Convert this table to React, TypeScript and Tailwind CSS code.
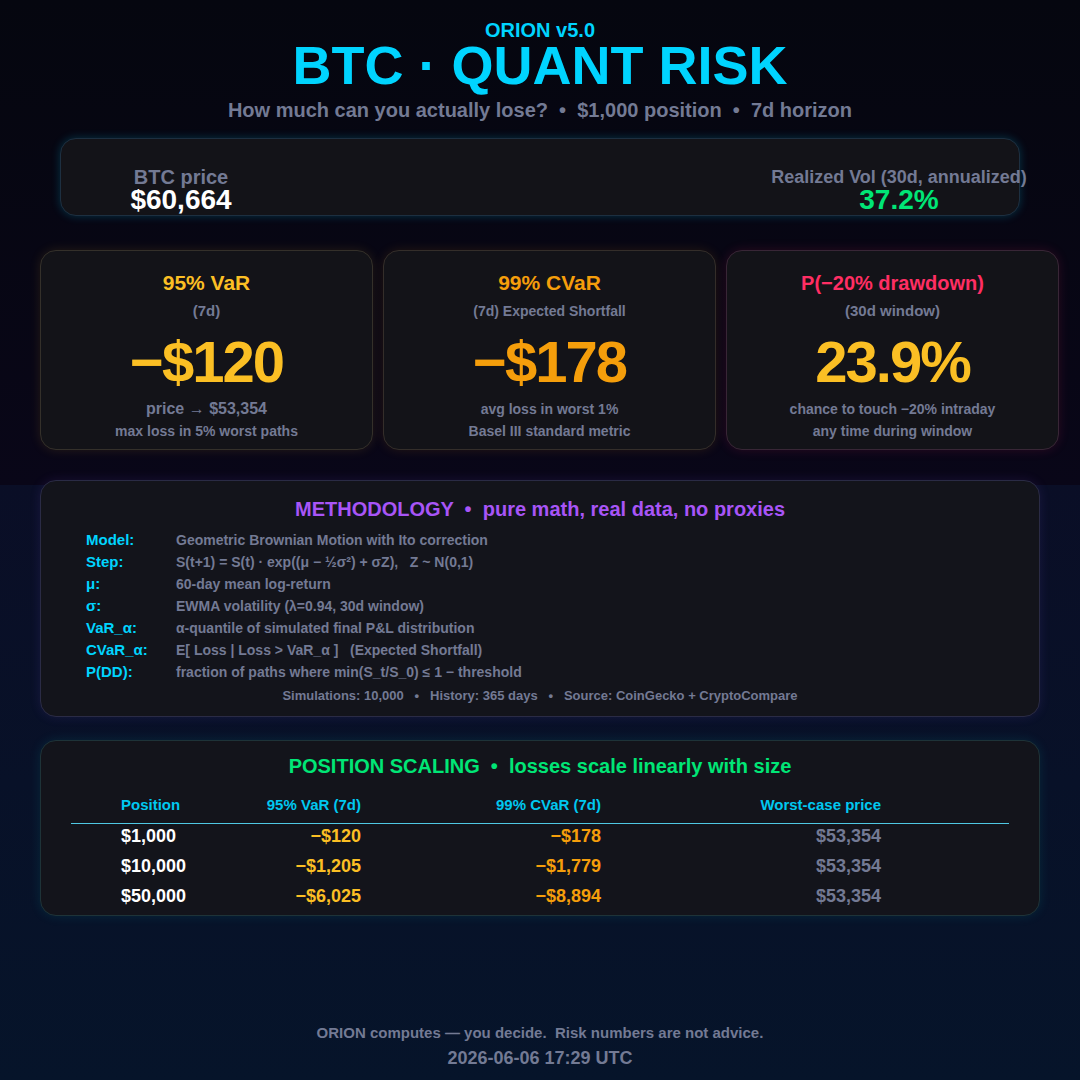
const font = { fontFamily: '"Liberation Sans", Arial, sans-serif' };

const methodology = [
  ["Model:", "Geometric Brownian Motion with Ito correction"],
  ["Step:", "S(t+1) = S(t) · exp((μ − ½σ²) + σZ),   Z ~ N(0,1)"],
  ["μ:", "60-day mean log-return"],
  ["σ:", "EWMA volatility (λ=0.94, 30d window)"],
  ["VaR_α:", "α-quantile of simulated final P&L distribution"],
  ["CVaR_α:", "E[ Loss | Loss > VaR_α ]   (Expected Shortfall)"],
  ["P(DD):", "fraction of paths where min(S_t/S_0) ≤ 1 − threshold"],
];

const scaling = [
  ["$1,000", "−$120", "−$178", "$53,354"],
  ["$10,000", "−$1,205", "−$1,779", "$53,354"],
  ["$50,000", "−$6,025", "−$8,894", "$53,354"],
];

function RiskCard({
  title,
  titleStyle,
  sub,
  subSize,
  value,
  valueColor,
  line1,
  line1Size,
  line2,
  frame,
}: {
  title: string;
  titleStyle: string;
  sub: string;
  subSize: string;
  value: string;
  valueColor: string;
  line1: string;
  line1Size: string;
  line2: string;
  frame: string;
}) {
  return (
    <div className={`flex h-[200px] flex-col items-center rounded-2xl border bg-[#131318] pt-[20px] ${frame}`}>
      <div className={`leading-[24px] font-bold ${titleStyle}`}>{title}</div>
      <div className={`mt-[6px] leading-[20px] font-bold text-[#737a94] ${subSize}`}>{sub}</div>
      <div className={`mt-[12px] text-[58px] leading-[58px] font-bold tracking-[-2px] ${valueColor}`}>{value}</div>
      <div className={`mt-[8px] leading-[20px] font-bold text-[#737a94] ${line1Size}`}>{line1}</div>
      <div className="mt-[3px] text-[14px] leading-[18px] font-bold text-[#737a94]">{line2}</div>
    </div>
  );
}

export default function App() {
  return (
    <div
      style={font}
      className="min-h-[1080px] w-full bg-[linear-gradient(180deg,#05060f_0px,#090618_485px,#0a0e26_485px,#06142a_1080px)] pt-[20px]"
    >
      <header className="flex flex-col items-center">
        <div className="text-[20px] leading-[20px] font-bold text-[#00d4ff]">ORION v5.0</div>
        <h1 className="text-[54px] leading-[50px] font-bold text-[#00d4ff]">BTC · QUANT RISK</h1>
        <p className="mt-[8px] whitespace-pre text-[20px] leading-[24px] font-bold text-[#737a94]">
          {"How much can you actually lose?  •  $1,000 position  •  7d horizon"}
        </p>
      </header>

      <section className="mx-[60px] mt-[16px] flex h-[78px] justify-between rounded-2xl border border-[#1d2f40] bg-[#131318] pt-[29px] shadow-[0_0_10px_rgba(0,212,255,0.22)]">
        <div className="flex w-[240px] flex-col items-center">
          <span className="text-[20px] leading-[18px] font-bold text-[#737a94]">BTC price</span>
          <span className="text-[28px] leading-[28px] font-bold text-white">$60,664</span>
        </div>
        <div className="flex w-[240px] flex-col items-center">
          <span className="whitespace-nowrap text-[18px] leading-[18px] font-bold text-[#737a94]">
            Realized Vol (30d, annualized)
          </span>
          <span className="text-[28px] leading-[28px] font-bold text-[#00e676]">37.2%</span>
        </div>
      </section>

      <section className="ml-[40px] mt-[34px] grid w-[1019px] grid-cols-3 gap-[10px]">
        <RiskCard
          title="95% VaR"
          titleStyle="text-[21px] text-[#fbbf24]"
          sub="(7d)"
          subSize="text-[15px]"
          value="−$120"
          valueColor="text-[#fbbf24]"
          line1="price → $53,354"
          line1Size="text-[16px]"
          line2="max loss in 5% worst paths"
          frame="border-[#34302a] shadow-[0_0_12px_rgba(251,191,36,0.12)]"
        />
        <RiskCard
          title="99% CVaR"
          titleStyle="text-[21px] text-[#f59e0b]"
          sub="(7d) Expected Shortfall"
          subSize="text-[14px]"
          value="−$178"
          valueColor="text-[#f59e0b]"
          line1="avg loss in worst 1%"
          line1Size="text-[14px]"
          line2="Basel III standard metric"
          frame="border-[#342e2a] shadow-[0_0_12px_rgba(245,158,11,0.12)]"
        />
        <RiskCard
          title="P(−20% drawdown)"
          titleStyle="text-[20px] text-[#ff2e63]"
          sub="(30d window)"
          subSize="text-[15px]"
          value="23.9%"
          valueColor="text-[#fbbf24]"
          line1="chance to touch −20% intraday"
          line1Size="text-[14px]"
          line2="any time during window"
          frame="border-[#382636] shadow-[0_0_12px_rgba(255,46,99,0.14)]"
        />
      </section>

      <section className="mx-[40px] mt-[30px] rounded-2xl border border-[#2a2b45] bg-[#13141b] pt-[16px] pb-[11px] shadow-[0_0_12px_rgba(139,92,246,0.12)]">
        <h2 className="whitespace-pre text-center text-[20px] leading-[24px] font-bold text-[#a855f7]">
          {"METHODOLOGY  •  pure math, real data, no proxies"}
        </h2>
        <div className="mt-[8px] flex flex-col pl-[45px]">
          {methodology.map(([k, v]) => (
            <div key={k} className="flex leading-[22px] font-bold">
              <span className="w-[90px] text-[15px] text-[#00d4ff]">{k}</span>
              <span className="whitespace-pre text-[14px] text-[#737a94]">{v}</span>
            </div>
          ))}
        </div>
        <p className="mt-[4px] whitespace-pre text-center text-[13px] leading-[18px] font-bold text-[#737a94]">
          {"Simulations: 10,000   •   History: 365 days   •   Source: CoinGecko + CryptoCompare"}
        </p>
      </section>

      <section className="mx-[40px] mt-[23px] rounded-2xl border border-[#1e3338] bg-[#13141b] px-[30px] pt-[13px] pb-[7px] shadow-[0_0_12px_rgba(0,200,200,0.12)]">
        <h2 className="whitespace-pre text-center text-[20px] leading-[24px] font-bold text-[#00e676]">
          {"POSITION SCALING  •  losses scale linearly with size"}
        </h2>
        <div className="mt-[17px] grid grid-cols-[50px_130px_110px_240px_280px_130px] border-b border-[#4fc8e3] pb-[8px] text-[15px] leading-[20px] font-bold text-[#00c8f0]">
          <span />
          <span>Position</span>
          <span className="text-right">95% VaR (7d)</span>
          <span className="text-right">99% CVaR (7d)</span>
          <span className="text-right">Worst-case price</span>
          <span />
        </div>
        <div className="flex flex-col gap-[6px] text-[18px] leading-[24px] font-bold">
          {scaling.map(([pos, v, c, p]) => (
            <div key={pos} className="grid grid-cols-[50px_130px_110px_240px_280px_130px]">
              <span />
              <span className="text-white">{pos}</span>
              <span className="text-right text-[#fbbf24]">{v}</span>
              <span className="text-right text-[#f59e0b]">{c}</span>
              <span className="text-right text-[#737a94]">{p}</span>
              <span />
            </div>
          ))}
        </div>
      </section>

      <footer className="mt-[107px] flex flex-col items-center font-bold text-[#737a94]">
        <p className="whitespace-pre text-[15px] leading-[20px]">
          {"ORION computes — you decide.  Risk numbers are not advice."}
        </p>
        <p className="mt-[4px] text-[18px] leading-[22px]">2026-06-06 17:29 UTC</p>
      </footer>
    </div>
  );
}
